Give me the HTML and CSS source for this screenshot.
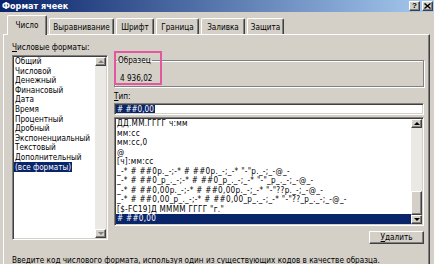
FILE: index.html
```html
<!DOCTYPE html>
<html>
<head>
    <title>Формат ячеек</title>
    <link rel="stylesheet" href="styles.css">
</head>
<body>

<div class="dialog">
    <header class="titlebar">
        <span class="title">Формат ячеек</span>
        <span class="caption-buttons">
            <span class="cap-btn">?</span>
            <span class="cap-btn">
                <svg width="7" height="6" viewBox="0 0 7 6">
                    <path d="M0.5 0.5 L6.5 5.5 M6.5 0.5 L0.5 5.5" stroke="#000" stroke-width="1.4" fill="none"/>
                </svg>
            </span>
        </span>
    </header>

    <nav class="tabs">
        <span class="tab active">Число</span>
        <span class="tab">Выравнивание</span>
        <span class="tab">Шрифт</span>
        <span class="tab">Граница</span>
        <span class="tab">Заливка</span>
        <span class="tab">Защита</span>
    </nav>

    <main class="panel">
        <div class="columns">
            <section class="left">
                <div class="label"><u>Ч</u>исловые форматы:</div>
                <div class="listbox categories">
                    <ul class="items">
                        <li><span>Общий</span></li>
                        <li><span>Числовой</span></li>
                        <li><span>Денежный</span></li>
                        <li><span>Финансовый</span></li>
                        <li><span>Дата</span></li>
                        <li><span>Время</span></li>
                        <li><span>Процентный</span></li>
                        <li><span>Дробный</span></li>
                        <li><span>Экспоненциальный</span></li>
                        <li><span>Текстовый</span></li>
                        <li><span>Дополнительный</span></li>
                        <li class="selected"><span>(все форматы)</span></li>
                    </ul>
                    <div class="scrollbar disabled">
                        <div class="sb-btn"><i class="arrow up"></i></div>
                        <div class="sb-track"></div>
                        <div class="sb-btn"><i class="arrow down"></i></div>
                    </div>
                </div>
            </section>

            <section class="right">
                <div class="sample-wrap">
                    <fieldset class="sample">
                        <legend>Образец</legend>
                        <div class="sample-value">4 936,02</div>
                    </fieldset>
                    <div class="highlight"></div>
                </div>

                <div class="label type-label"><u>Т</u>ип:</div>
                <div class="type-input"><span class="selected-text"># ##0,00</span></div>

                <div class="listbox formats">
                    <ul class="items">
                        <li>ДД.ММ.ГГГГ ч:мм</li>
                        <li>мм:сс</li>
                        <li>мм:сс,0</li>
                        <li>@</li>
                        <li>[ч]:мм:сс</li>
                        <li>_-* # ##0р._-;-* # ##0р._-;_-* "-"р._-;_-@_-</li>
                        <li>_-* # ##0_р_._-;-* # ##0_р_._-;_-* "-"_р_._-;_-@_-</li>
                        <li>_-* # ##0,00р._-;-* # ##0,00р._-;_-* "-"??р._-;_-@_-</li>
                        <li>_-* # ##0,00_р_._-;-* # ##0,00_р_._-;_-* "-"??_р_._-;_-@_-</li>
                        <li>[$-FC19]Д ММММ ГГГГ "г."</li>
                        <li class="selected"># ##0,00</li>
                    </ul>
                    <div class="scrollbar">
                        <div class="sb-btn"><i class="arrow up"></i></div>
                        <div class="sb-track"></div>
                        <div class="sb-btn thumb"></div>
                        <div class="sb-btn"><i class="arrow down"></i></div>
                    </div>
                </div>

                <div class="actions">
                    <button class="btn"><u>У</u>далить</button>
                </div>
            </section>
        </div>

        <p class="hint">Введите код числового формата, используя один из существующих кодов в качестве образца.</p>
    </main>
</div>

</body>
</html>
```

FILE: styles.css
```css
body {
    margin: 0;
    background-color: #d4d0c8;
    font-family: "DejaVu Sans Condensed", "Liberation Sans", sans-serif;
    font-size: 8.1px;
    color: #000;
}

.dialog {
    width: 434px;
    height: 264px;
    overflow: hidden;
}

/* title bar */

.titlebar {
    height: 12px;
    display: flex;
    align-items: center;
    justify-content: space-between;
    padding: 0 1px 0 2px;
    background: linear-gradient(to right, #0a246a, #a6caf0);
}

.title {
    color: white;
    font-weight: bold;
    font-size: 9px;
    line-height: 12px;
}

.caption-buttons {
    display: flex;
    gap: 2px;
}

.cap-btn {
    width: 11px;
    height: 10px;
    box-sizing: border-box;
    display: flex;
    align-items: center;
    justify-content: center;
    background-color: #d4d0c8;
    border: 1px solid;
    border-color: #fff #404040 #404040 #fff;
    box-shadow: inset -1px -1px #808080;
    font-family: "Liberation Sans", sans-serif;
    font-weight: bold;
    font-size: 8px;
    line-height: 8px;
}

/* tabs */

.tabs {
    display: flex;
    align-items: flex-end;
    height: 19px;
    margin-top: 3px;
    padding-left: 7px;
}

.tab {
    height: 16px;
    box-sizing: border-box;
    display: flex;
    align-items: center;
    justify-content: center;
    margin-left: 2px;
    border-top: 1px solid #fff;
    border-left: 1px solid #fff;
    border-right: 1px solid #404040;
    box-shadow: inset -1px 0 #808080;
    border-radius: 2px 2px 0 0;
    background-color: #d4d0c8;
}

.tab.active {
    width: 40px;
    height: 20px;
    margin-left: 0;
    margin-bottom: -1px;
    padding-bottom: 1px;
}

.tab:nth-child(2) { width: 65px; }
.tab:nth-child(3) { width: 38px; }
.tab:nth-child(4) { width: 43px; }
.tab:nth-child(5) { width: 44px; }
.tab:nth-child(6) { width: 37px; }

/* panel */

.panel {
    margin: 0 4px 0 3px;
    height: 240px;
    padding: 0 5px 0 8px;
    border-top: 1px solid #fff;
    border-left: 1px solid #fff;
    border-right: 1px solid #404040;
    box-shadow: inset -1px 0 #808080;
}

.columns {
    display: grid;
    grid-template-columns: 96px 310px;
    column-gap: 6px;
    align-items: start;
}

.label {
    line-height: 10px;
    margin-top: 7px;
}

.type-label {
    margin-top: 4px;
}

/* list boxes */

.listbox {
    display: flex;
    box-sizing: border-box;
    background-color: white;
    border: 1px solid;
    border-color: #808080 #fff #fff #808080;
    box-shadow: inset 1px 1px #404040, inset -1px -1px #d4d0c8;
    padding: 1px;
}

.items {
    flex: 1;
    list-style: none;
    margin: 0;
    padding: 0;
    overflow: hidden;
    white-space: nowrap;
}

.categories {
    height: 185px;
    margin-top: 3px;
}

.categories li {
    line-height: 9.6px;
}

.categories li span {
    padding: 0 1px;
}

.categories li.selected span {
    background-color: #0a246a;
    color: white;
}

.formats {
    height: 109px;
    margin-top: 2px;
}

.formats li {
    line-height: 9.55px;
    padding-left: 1px;
    letter-spacing: 0.3px;
}

.formats li.selected {
    background-color: #0a246a;
    color: white;
}

/* scrollbars */

.scrollbar {
    width: 11px;
    display: flex;
    flex-direction: column;
    background-color: #ebe9e4;
}

.sb-btn {
    height: 9px;
    box-sizing: border-box;
    display: flex;
    align-items: center;
    justify-content: center;
    background-color: #d4d0c8;
    border: 1px solid;
    border-color: #fff #404040 #404040 #fff;
    box-shadow: inset -1px -1px #808080;
}

.sb-track {
    flex: 1;
}

.thumb {
    height: 24px;
}

.arrow {
    width: 0;
    height: 0;
    border-left: 3px solid transparent;
    border-right: 3px solid transparent;
}

.arrow.up {
    border-bottom: 3px solid #000;
}

.arrow.down {
    border-top: 3px solid #000;
}

.disabled .arrow.up {
    border-bottom-color: #808080;
}

.disabled .arrow.down {
    border-top-color: #808080;
}

/* sample group */

.sample-wrap {
    position: relative;
    margin-top: 20px;
}

.sample {
    margin: 0;
    padding: 8px 5px 3px;
    border: 1px solid #808080;
    box-shadow: 1px 1px #fff, inset 1px 1px #fff;
    min-width: 0;
}

.sample legend {
    padding: 0 1px;
    margin-left: -3px;
    line-height: 10px;
}

.sample-value {
    line-height: 10px;
}

.highlight {
    position: absolute;
    top: -4px;
    left: 0;
    width: 48px;
    height: 34px;
    box-sizing: border-box;
    border: 2px solid #e3579f;
}

.type-input {
    height: 12px;
    margin-top: 2px;
    box-sizing: border-box;
    background-color: white;
    border: 1px solid;
    border-color: #808080 #fff #fff #808080;
    box-shadow: inset 1px 1px #404040, inset -1px -1px #d4d0c8;
    padding: 1px;
    line-height: 8px;
}

.selected-text {
    display: inline-block;
    background-color: #0a246a;
    color: white;
    padding: 0 1px;
    line-height: 8px;
}

.actions {
    display: flex;
    justify-content: flex-end;
    margin-top: 5px;
}

.btn {
    width: 55px;
    height: 13px;
    padding: 0;
    font: inherit;
    line-height: 9px;
    color: #000;
    background-color: #d4d0c8;
    border: 1px solid;
    border-color: #fff #404040 #404040 #fff;
    box-shadow: inset -1px -1px #808080;
}

.hint {
    margin: 11px 0 0 0;
    line-height: 10px;
}
```
